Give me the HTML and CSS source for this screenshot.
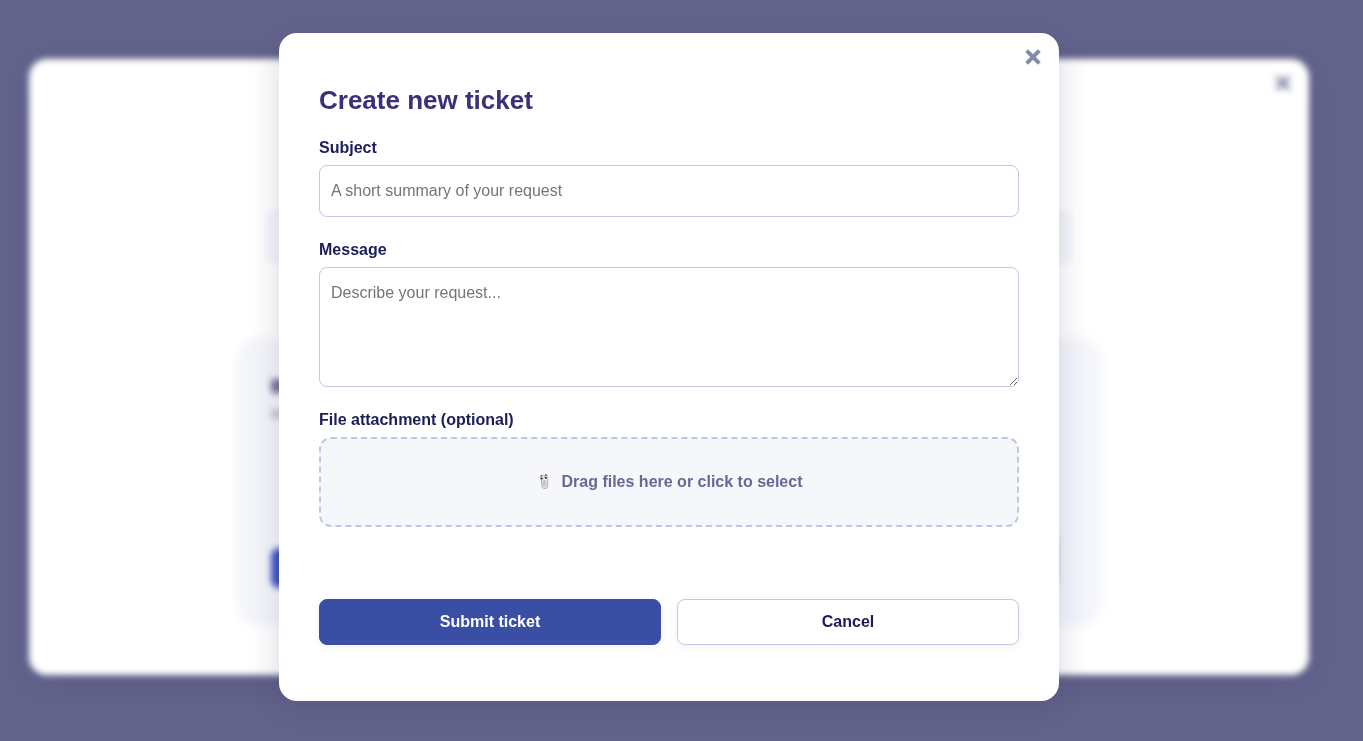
FILE: index.html
```html
<!DOCTYPE html>
<html lang="en">
<head>
<meta charset="utf-8">
<title>Create new ticket</title>
<link rel="stylesheet" href="styles.css">
</head>
<body>
<div class="backdrop" aria-hidden="true">
  <div class="panel">
    <svg class="panel-close" viewBox="0 0 16 16"><path d="M1.7 1.7 14.3 14.3M14.3 1.7 1.7 14.3"/></svg>
    <div class="panel-filter"></div>
    <div class="panel-card">
      <div class="card-title"></div>
      <div class="card-meta"></div>
      <div class="card-actions">
        <div class="card-primary"></div>
        <div class="card-secondary"></div>
      </div>
    </div>
  </div>
</div>

<div class="overlay">
  <div class="dialog" role="dialog" aria-modal="true" aria-labelledby="dialog-title">
    <button class="dialog-close" type="button" aria-label="Close">
      <svg viewBox="0 0 16 16"><path d="M1.7 1.7 14.3 14.3M14.3 1.7 1.7 14.3"/></svg>
    </button>
    <h2 class="dialog-title" id="dialog-title">Create new ticket</h2>
    <form class="form">
      <div class="field">
        <label class="label" for="subject">Subject</label>
        <input class="control" id="subject" type="text" placeholder="A short summary of your request">
      </div>
      <div class="field">
        <label class="label" for="message">Message</label>
        <textarea class="control control-area" id="message" placeholder="Describe your request..."></textarea>
      </div>
      <div class="field">
        <label class="label" for="files">File attachment (optional)</label>
        <label class="dropzone" for="files">
          <svg class="clip" viewBox="-3 0 16 16" aria-hidden="true">
            <path class="clip-wire" d="M2.4 5.5 2.9 11.8a2.9 2.9 0 0 0 5.8-.2L8.6 5M4 6.4l.4 5a1.4 1.4 0 0 0 2.8-.1L6.8 7a.9.9 0 0 0-1.6 0l.3 4M1.5 4C1.8.8 7.6.2 8.6 4"/>
            <ellipse class="clip-eye" cx="2.8" cy="4.3" rx="1.7" ry="1.6"/>
            <ellipse class="clip-eye" cx="7" cy="3.4" rx="1.7" ry="1.6"/>
            <circle class="clip-pupil" cx="2.6" cy="4.5" r="1"/>
            <circle class="clip-pupil" cx="6.8" cy="3.8" r="1"/>
            <path class="clip-brow" d="M1.4 2.3 3.2 1.2M6 .8 8.2 1.2"/>
          </svg>
          <span>Drag files here or click to select</span>
          <input class="file-input" id="files" type="file" multiple>
        </label>
      </div>
      <div class="actions">
        <button class="button button-primary" type="submit">Submit ticket</button>
        <button class="button" type="button">Cancel</button>
      </div>
    </form>
  </div>
</div>
</body>
</html>
```

FILE: styles.css
```css
* {
  box-sizing: border-box;
}

body {
  margin: 0;
  min-height: 100vh;
  overflow: hidden;
  background: #63648c;
  color: #1b1c58;
  font: 16px/24px "Liberation Sans", Arial, sans-serif;
}

.backdrop,
.overlay {
  position: fixed;
  inset: 0;
  display: flex;
  align-items: center;
  justify-content: center;
  padding: 0 25px 7px 0;
}

.backdrop {
  filter: blur(3px);
}

.panel {
  position: relative;
  width: 100%;
  max-width: 1280px;
  padding: 152px 210px 52px;
  border-radius: 18px;
  background: #fff;
  box-shadow: 0 8px 32px rgba(50, 45, 110, 0.16);
}

.panel-close {
  position: absolute;
  top: 16px;
  right: 18px;
  width: 16px;
  height: 16px;
}

.panel-close path,
.dialog-close path {
  fill: none;
  stroke: #818cab;
  stroke-width: 4;
}

.panel-filter {
  height: 52px;
  margin: 0 28px 78px;
  border: 1px solid #dfe3f3;
  border-radius: 8px;
  background: #f5f7fb;
}

.panel-card {
  padding: 38px 32px 34px;
  border-radius: 18px;
  background: #f4f6fb;
  box-shadow: 0 0 12px rgba(60, 80, 150, 0.07);
}

.card-title {
  width: 200px;
  height: 14px;
  margin-bottom: 16px;
  background: #77749a;
}

.card-meta {
  width: 160px;
  height: 10px;
  margin-bottom: 112px;
  background: #c8c9d8;
}

.card-actions {
  display: flex;
  justify-content: space-between;
  align-items: center;
  padding-right: 8px;
}

.card-primary {
  width: 160px;
  height: 40px;
  margin-top: 16px;
  border-radius: 8px;
  background: #3f53c2;
}

.card-secondary {
  width: 160px;
  height: 58px;
  border-radius: 8px;
  background: #d5d8ec;
}

.dialog {
  position: relative;
  width: 100%;
  max-width: 780px;
  padding: 52px 40px 56px;
  border-radius: 18px;
  background: #fff;
  box-shadow: 0 8px 32px rgba(44, 38, 88, 0.18);
}

.dialog-close {
  position: absolute;
  top: 16px;
  right: 18px;
  width: 16px;
  height: 16px;
  padding: 0;
  border: 0;
  background: none;
  cursor: pointer;
}

.dialog-close svg {
  display: block;
  overflow: visible;
}

.dialog-title {
  margin: 0 0 20px;
  color: #3b3079;
  font-size: 26px;
  line-height: 30px;
}

.form,
.field {
  display: flex;
  flex-direction: column;
}

.form {
  gap: 20px;
}

.field {
  gap: 4px;
}

.label {
  font-weight: bold;
  line-height: 26px;
}

.control {
  width: 100%;
  height: 52px;
  padding: 13px 11px;
  border: 1px solid #c2c9e6;
  border-radius: 8px;
  background: #fff;
  color: #1b1c58;
  font: inherit;
}

.control::placeholder {
  color: #757575;
}

.control-area {
  display: block;
  height: 120px;
  resize: vertical;
}

.dropzone {
  display: flex;
  align-items: center;
  justify-content: center;
  gap: 10px;
  height: 90px;
  border: 2px dashed #bfc8e3;
  border-radius: 12px;
  background: #f5f7fb;
  color: #6a6696;
  font-weight: bold;
  cursor: pointer;
}

.clip {
  width: 16px;
  height: 16px;
}

.clip-wire {
  fill: none;
  stroke: #929294;
  stroke-width: 0.7;
}

.clip-eye {
  fill: #fff;
  stroke: #777;
  stroke-width: 0.4;
}

.clip-pupil {
  fill: #222;
}

.clip-brow {
  fill: none;
  stroke: #4a3636;
  stroke-width: 1;
}

.file-input {
  position: absolute;
  width: 1px;
  height: 1px;
  opacity: 0;
}

.actions {
  display: flex;
  gap: 16px;
  margin-top: 52px;
}

.button {
  flex: 1;
  height: 46px;
  padding: 0 16px;
  border: 1px solid #c2c9e6;
  border-radius: 8px;
  background: #fff;
  box-shadow: 0 2px 8px rgba(60, 50, 120, 0.07);
  color: #1b1c58;
  font: inherit;
  font-weight: bold;
  cursor: pointer;
}

.button-primary {
  border-color: #3a4fa3;
  background: #3a4fa3;
  color: #fff;
}
```
